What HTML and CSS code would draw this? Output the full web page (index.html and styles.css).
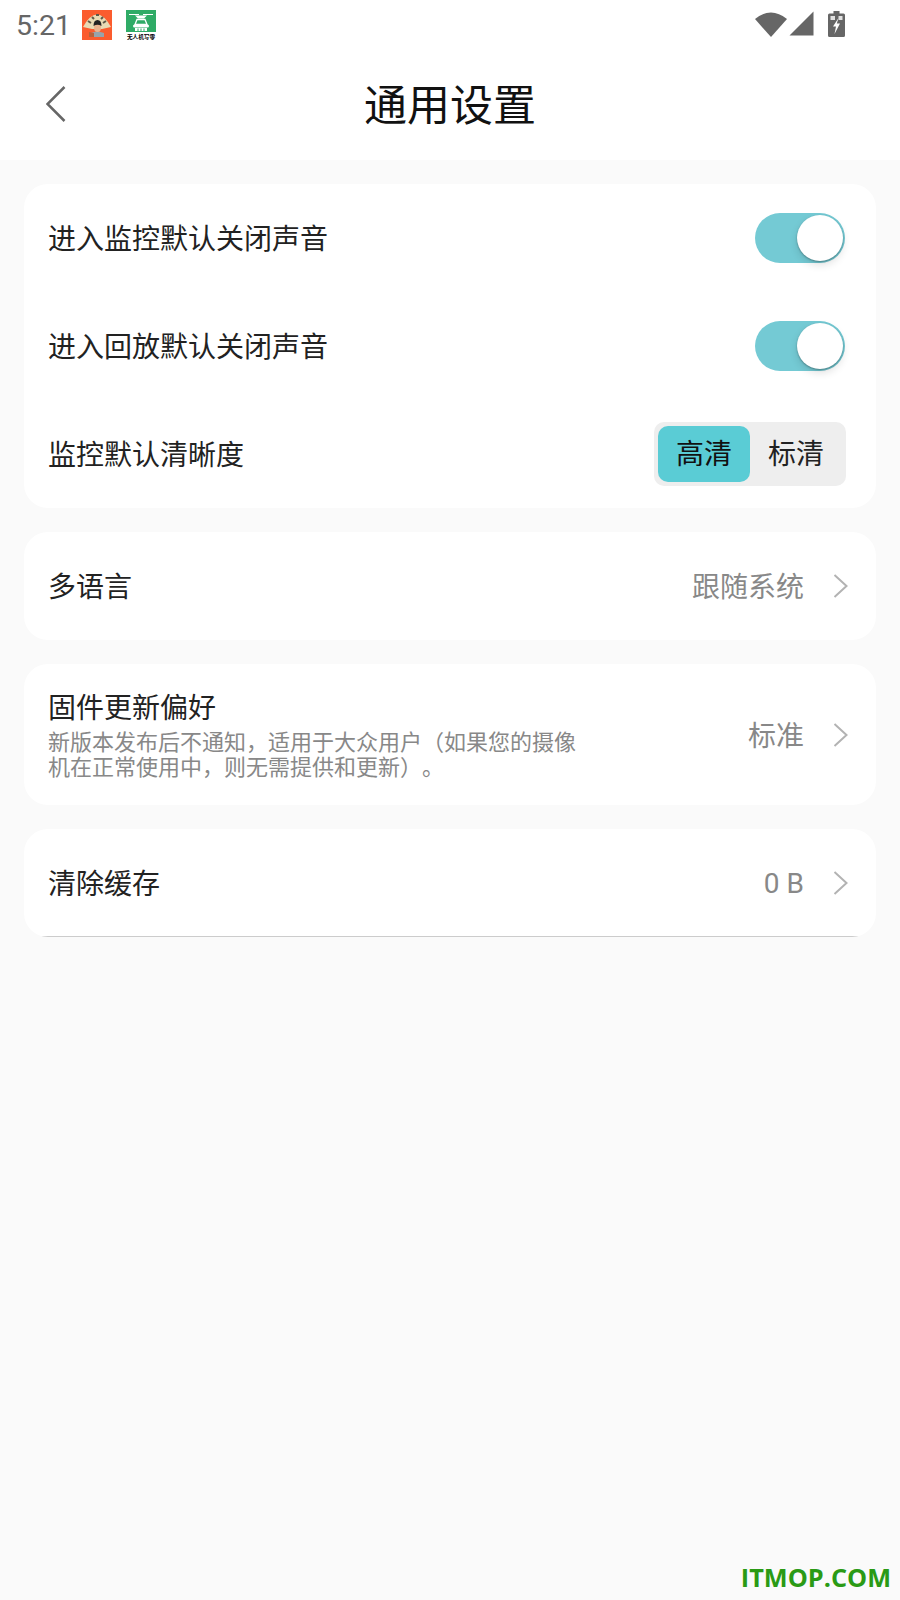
FILE: index.html
```html
<!DOCTYPE html>
<html>
  <head>
    <meta http-equiv="Content-Type" content="text/html;charset=UTF-8" />
    <meta name="viewport" content="width=device-width, initial-scale=1.0" />
    <title>通用设置</title>
    <link rel="stylesheet" href="styles.css">
  </head>
  <body>
    <div class="top">
      <div class="status_bar">
        <span class="status_time">5:21</span>
        <!-- notification icons -->
        <svg class="notify_icon" viewBox="0 0 30 30">
          <rect width="30" height="30" fill="#fb5c2e" />
          <path d="M1 17 Q15 -8 29 17 L20 19 H10 Z" fill="#e8dab4" />
          <path d="M6 11l3 2M14 5h3M24 11l-3 2M10 7l2 2M21 7l-2 2" stroke="#5f5a48" stroke-width="2" />
          <path d="M9 27 V23 Q15 20 22 23 V27 Z" fill="#97a3ab" />
          <path d="M7 27 V22 l5 1 v4 Z" fill="#b9623a" />
          <ellipse cx="15.500" cy="17.500" rx="3.500" ry="4.500" fill="#e9b48f" />
          <path d="M11.500 16 Q11.500 10 15.500 10 Q19.500 10 19.500 16 Q15.500 13.500 11.500 16 Z" fill="#222" />
        </svg>
        <svg class="notify_icon" viewBox="0 0 30 30">
          <rect width="30" height="22" fill="#2fab66" />
          <path d="M3 4.500h10M17 4.500h10" stroke="#fff" stroke-width="1.200" />
          <path d="M9 5.500h12l-3 3h-6Z" fill="#fff" />
          <path d="M11 9.500h8l2 5h-12Z" fill="none" stroke="#fff" stroke-width="1.300" />
          <rect x="7" y="14.500" width="16" height="3" rx="1.500" fill="#fff" />
          <rect x="9" y="18" width="12" height="3" fill="#fff" />
          <path d="M12 18.500v2.500M15 18.500v2.500M18 18.500v2.500" stroke="#2fab66" />
          <text x="15" y="29" class="drone_label" text-anchor="middle">无人机写零</text>
        </svg>
        <div class="status_right">
          <svg class="wifi" viewBox="0 0 32 26">
            <path d="M0 8 Q16 -5 32 8 L16 26 Z" fill="#666" />
          </svg>
          <svg class="signal" viewBox="0 0 25 25">
            <path d="M0.500 24.500 L24.500 0.500 V24.500 Z" fill="#666" />
          </svg>
          <svg class="battery" viewBox="0 0 17 26">
            <path d="M5.500 0h6v2.500h4q1.500 0 1.500 1.500v20.500q0 1.500 -1.500 1.500h-14q-1.500 0 -1.500 -1.500v-20.500q0 -1.500 1.500 -1.500h4z" fill="#666" />
            <rect x="2.500" y="5" width="4.500" height="4" fill="#e2e2e2" />
            <rect x="10.500" y="5" width="4" height="4" fill="#e2e2e2" />
            <path d="M10.500 7 L5 15.500 H8 L6.500 23 L12 12.500 H8.800 Z" fill="#fff" />
          </svg>
        </div>
      </div>
      <div class="title_bar">
        <svg class="back" viewBox="0 0 20 36">
          <path d="M18.500 1 L1.500 18 L18.500 35" fill="none" stroke="#666" stroke-width="2.500" />
        </svg>
        <h1>通用设置</h1>
      </div>
    </div>

    <div class="content">
      <div class="card">
        <div class="row">
          <div class="row_label">进入监控默认关闭声音</div>
          <div class="toggle"><div class="toggle_knob"></div></div>
        </div>
        <div class="row">
          <div class="row_label">进入回放默认关闭声音</div>
          <div class="toggle"><div class="toggle_knob"></div></div>
        </div>
        <div class="row">
          <div class="row_label">监控默认清晰度</div>
          <div class="segment">
            <div class="segment_item _active">高清</div>
            <div class="segment_item">标清</div>
          </div>
        </div>
      </div>

      <div class="card">
        <div class="row">
          <div class="row_label">多语言</div>
          <div class="row_value">跟随系统</div>
          <svg class="chevron" viewBox="0 0 15 24"><path d="M1.500 1 L13.500 12 L1.500 23" /></svg>
        </div>
      </div>

      <div class="card">
        <div class="row row_tall">
          <div class="row_text">
            <div class="row_label">固件更新偏好</div>
            <div class="row_desc">新版本发布后不通知，适用于大众用户（如果您的摄像机在正常使用中，则无需提供和更新）。</div>
          </div>
          <div class="row_value">标准</div>
          <svg class="chevron" viewBox="0 0 15 24"><path d="M1.500 1 L13.500 12 L1.500 23" /></svg>
        </div>
      </div>

      <div class="card card_lined">
        <div class="row">
          <div class="row_label">清除缓存</div>
          <div class="row_value row_value_num">0 B</div>
          <svg class="chevron" viewBox="0 0 15 24"><path d="M1.500 1 L13.500 12 L1.500 23" /></svg>
        </div>
      </div>
    </div>

    <div class="watermark">ITMOP.COM</div>
  </body>
</html>
```

FILE: styles.css
```css
html {
  font-size: 28px;
  font-family: "Noto Sans CJK SC", Roboto, sans-serif;
  text-spacing-trim: space-all;
}
body {
  margin: 0;
  width: 900px;
  height: 1600px;
  position: relative;
  overflow: hidden;
  background-color: #fafafa;
  color: #222;
}

/* top area */
.top {
  height: 160px;
  background-color: #fff;
}
.status_bar {
  height: 50px;
  display: flex;
  align-items: center;
  padding-left: 16px;
  padding-right: 55px;
}
.status_time {
  font-family: Roboto, sans-serif;
  font-size: 28.5px;
  color: #666;
  width: 66px;
}
.notify_icon {
  width: 30px;
  height: 30px;
  margin-right: 14px;
}
.drone_label {
  font-size: 5.6px;
  font-weight: bold;
  fill: #000;
}
.status_right {
  margin-left: auto;
  padding-bottom: 3px;
  display: flex;
  align-items: center;
}
.wifi {
  width: 32px;
  height: 26px;
  margin-right: 2px;
}
.signal {
  width: 25px;
  height: 25px;
  margin-right: 14px;
}
.battery {
  width: 17px;
  height: 26px;
}
.title_bar {
  height: 110px;
  box-sizing: border-box;
  padding-bottom: 6px;
  position: relative;
  display: flex;
  align-items: center;
  justify-content: center;
}
.title_bar h1 {
  margin: 0;
  font-size: 43px;
  font-weight: 400;
  color: #111;
}
.back {
  position: absolute;
  left: 46px;
  top: 36px;
  width: 20px;
  height: 36px;
}

/* cards */
.content {
  padding: 24px;
  display: flex;
  flex-direction: column;
  gap: 24px;
}
.card {
  background-color: #fff;
  border-radius: 24px;
  overflow: hidden;
  position: relative;
}
.card_lined::after {
  content: "";
  position: absolute;
  left: 16px;
  right: 16px;
  bottom: 0;
  height: 1px;
  background-color: #ccc;
}
.row {
  height: 108px;
  display: flex;
  align-items: center;
  padding: 0 28px 0 24px;
}
.row_tall {
  height: 141px;
}
.row_text {
  width: 530px;
  padding-bottom: 4px;
}
.row_label {
  line-height: 36px;
  padding-bottom: 2px;
  margin-right: auto;
}
.row_text .row_label {
  padding-bottom: 0;
  margin-bottom: 4px;
}
.row_desc {
  font-size: 22px;
  line-height: 25px;
  color: #888;
}
.row_value {
  color: #888;
  margin-left: auto;
  padding-bottom: 2px;
}
.row_value_num {
  font-family: Roboto, sans-serif;
  padding-bottom: 0;
}
.chevron {
  width: 15px;
  height: 24px;
  margin-left: 29px;
  fill: none;
  stroke: #b3b3b3;
  stroke-width: 2;
}

/* switch */
.toggle {
  width: 90px;
  height: 50px;
  border-radius: 25px;
  margin-right: 3px;
  background-color: #74cad4;
  position: relative;
}
.toggle_knob {
  position: absolute;
  right: 2px;
  top: 2px;
  width: 46px;
  height: 46px;
  box-sizing: border-box;
  border-radius: 50%;
  background-color: #fff;
  box-shadow: 0 1px 2px rgba(0, 0, 0, 0.3), 0 4px 8px rgba(0, 0, 0, 0.12);
}

/* hd / sd picker */
.segment {
  width: 192px;
  height: 64px;
  box-sizing: border-box;
  padding: 4px;
  border-radius: 10px;
  background-color: #eee;
  display: flex;
  margin-right: 2px;
}
.segment_item {
  flex: 1;
  height: 56px;
  line-height: 53px;
  text-align: center;
}
.segment_item._active {
  flex: 0 0 92px;
  border-radius: 10px;
  background-color: #5accd5;
  color: #111;
}

.watermark {
  position: absolute;
  right: 9px;
  bottom: 6px;
  font-family: "Open Sans", sans-serif;
  font-size: 25.3px;
  font-weight: 700;
  color: #2a9a15;
}
```
